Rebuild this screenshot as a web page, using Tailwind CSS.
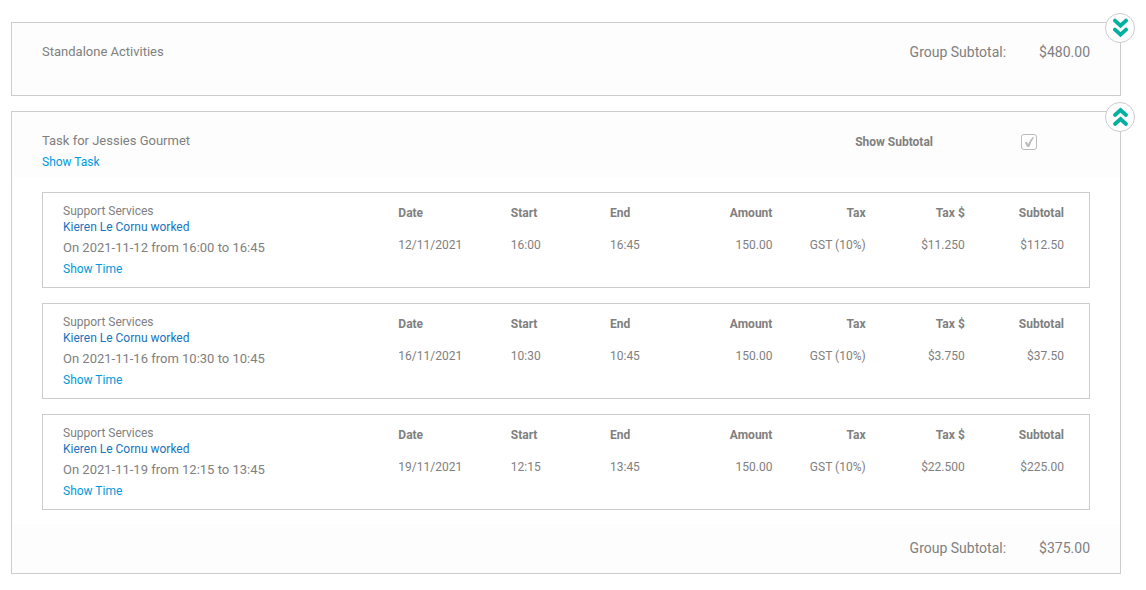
<!DOCTYPE html>
<html lang="en">
<head>
<meta charset="utf-8">
<meta name="viewport" content="width=device-width, initial-scale=1">
<title>Billing groups</title>
<script src="https://cdn.jsdelivr.net/npm/@tailwindcss/browser@4"></script>
</head>
<body class="bg-white font-['Roboto',sans-serif] text-xs leading-4 text-[#808080]">
<main class="flex flex-col gap-[15px] pt-[22px] pr-[25px] pl-[11px]">

  <section class="relative border border-[#ccc] bg-[#fdfdfd]">
    <button type="button" aria-label="Expand group" class="absolute -top-[10px] -right-[15px] flex size-[30px] items-center justify-center rounded-full border border-[#ccc] bg-white">
      <svg class="size-[20px]" viewBox="0 0 20 20" fill="none" stroke="#00b0a0" stroke-width="3.8" stroke-linecap="round"><path d="M5 2.600 10.500 7.600 16 2.600M5 11.600 10.500 16.600 16 11.600"/></svg>
    </button>
    <header class="flex items-start justify-between pt-[19px] pr-[30px] pb-[33px] pl-[30px]">
      <h2 class="text-[13px] leading-5">Standalone Activities</h2>
      <p class="flex gap-[33px] text-sm leading-5"><span>Group Subtotal:</span><span>$480.00</span></p>
    </header>
  </section>

  <section class="relative border border-[#ccc]">
    <button type="button" aria-label="Collapse group" class="absolute -top-[10px] -right-[15px] flex size-[30px] items-center justify-center rounded-full border border-[#ccc] bg-white">
      <svg class="size-[20px]" viewBox="0 0 20 20" fill="none" stroke="#00b0a0" stroke-width="3.8" stroke-linecap="round"><path d="M5 8 10.500 3 16 8M5 17 10.500 12 16 17"/></svg>
    </button>
    <header class="flex items-start justify-between bg-[#fdfdfd] pt-[18px] pr-[83px] pb-[3px] pl-[30px]">
      <div>
        <h2 class="text-[13px] leading-[21px]">Task for Jessies Gourmet</h2>
        <a href="#" class="block leading-[23px] text-[#0099dd]">Show Task</a>
      </div>
      <div class="flex items-center gap-[88px] pt-1">
        <label for="show-subtotal" class="font-bold">Show Subtotal</label>
        <span class="relative block size-4">
          <input id="show-subtotal" type="checkbox" checked class="block size-4 appearance-none rounded-[3px] border border-[#bbb] bg-white">
          <svg class="pointer-events-none absolute inset-0 size-4" viewBox="0 0 16 16" fill="#bbb"><path d="M3.800 8.600 5.600 7.700 7.100 10.100Q9 6 12 2.800L13 3.300Q10.200 7.500 8.500 12.800L6.300 13Z"/></svg>
        </span>
      </div>
    </header>

    <div class="flex flex-col gap-[15px] px-[30px] pt-[15px] pb-[14px]">
      <article class="flex border border-[#ccc] pt-[10px] pr-[25px] pb-[6px] pl-5">
        <div class="w-[33.5%]">
          <p>Support Services</p>
          <a href="#" class="block text-[#1874bd]">Kieren Le Cornu worked</a>
          <p class="mt-[2px] text-[13px] leading-[21px]">On 2021-11-12 from 16:00 to 16:45</p>
          <a href="#" class="block leading-[23px] text-[#0099dd]">Show Time</a>
        </div>
        <div class="flex-1 pt-[2px]">
          <table class="w-full table-fixed">
            <colgroup><col class="w-[16.9%]"><col class="w-[14.9%]"><col class="w-[9.3%]"><col class="w-[15.1%]"><col class="w-[14%]"><col class="w-[14.9%]"><col class="w-[14.9%]"></colgroup>
            <thead><tr class="text-right"><th class="pb-4 text-left">Date</th><th class="pb-4 text-left">Start</th><th class="pb-4 text-left">End</th><th class="pb-4">Amount</th><th class="pb-4">Tax</th><th class="pb-4">Tax $</th><th class="pb-4">Subtotal</th></tr></thead>
            <tbody><tr class="text-right"><td class="text-left">12/11/2021</td><td class="text-left">16:00</td><td class="text-left">16:45</td><td>150.00</td><td>GST (10%)</td><td>$11.250</td><td>$112.50</td></tr></tbody>
          </table>
        </div>
      </article>

      <article class="flex border border-[#ccc] pt-[10px] pr-[25px] pb-[6px] pl-5">
        <div class="w-[33.5%]">
          <p>Support Services</p>
          <a href="#" class="block text-[#1874bd]">Kieren Le Cornu worked</a>
          <p class="mt-[2px] text-[13px] leading-[21px]">On 2021-11-16 from 10:30 to 10:45</p>
          <a href="#" class="block leading-[23px] text-[#0099dd]">Show Time</a>
        </div>
        <div class="flex-1 pt-[2px]">
          <table class="w-full table-fixed">
            <colgroup><col class="w-[16.9%]"><col class="w-[14.9%]"><col class="w-[9.3%]"><col class="w-[15.1%]"><col class="w-[14%]"><col class="w-[14.9%]"><col class="w-[14.9%]"></colgroup>
            <thead><tr class="text-right"><th class="pb-4 text-left">Date</th><th class="pb-4 text-left">Start</th><th class="pb-4 text-left">End</th><th class="pb-4">Amount</th><th class="pb-4">Tax</th><th class="pb-4">Tax $</th><th class="pb-4">Subtotal</th></tr></thead>
            <tbody><tr class="text-right"><td class="text-left">16/11/2021</td><td class="text-left">10:30</td><td class="text-left">10:45</td><td>150.00</td><td>GST (10%)</td><td>$3.750</td><td>$37.50</td></tr></tbody>
          </table>
        </div>
      </article>

      <article class="flex border border-[#ccc] pt-[10px] pr-[25px] pb-[6px] pl-5">
        <div class="w-[33.5%]">
          <p>Support Services</p>
          <a href="#" class="block text-[#1874bd]">Kieren Le Cornu worked</a>
          <p class="mt-[2px] text-[13px] leading-[21px]">On 2021-11-19 from 12:15 to 13:45</p>
          <a href="#" class="block leading-[23px] text-[#0099dd]">Show Time</a>
        </div>
        <div class="flex-1 pt-[2px]">
          <table class="w-full table-fixed">
            <colgroup><col class="w-[16.9%]"><col class="w-[14.9%]"><col class="w-[9.3%]"><col class="w-[15.1%]"><col class="w-[14%]"><col class="w-[14.9%]"><col class="w-[14.9%]"></colgroup>
            <thead><tr class="text-right"><th class="pb-4 text-left">Date</th><th class="pb-4 text-left">Start</th><th class="pb-4 text-left">End</th><th class="pb-4">Amount</th><th class="pb-4">Tax</th><th class="pb-4">Tax $</th><th class="pb-4">Subtotal</th></tr></thead>
            <tbody><tr class="text-right"><td class="text-left">19/11/2021</td><td class="text-left">12:15</td><td class="text-left">13:45</td><td>150.00</td><td>GST (10%)</td><td>$22.500</td><td>$225.00</td></tr></tbody>
          </table>
        </div>
      </article>
    </div>

    <footer class="flex justify-end gap-[33px] bg-[#fdfdfd] pt-[14px] pr-[30px] pb-[15px] text-sm leading-5"><span>Group Subtotal:</span><span>$375.00</span></footer>
  </section>
</main>
</body>
</html>
